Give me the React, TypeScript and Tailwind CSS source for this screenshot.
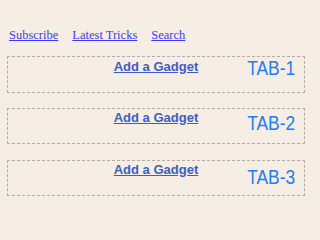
const NAV = ["Subscribe", "Latest Tricks", "Search"];

const TABS = [
  { label: "TAB-1", box: "h-[37px]", gadget: "mt-[2px]", tab: "mt-[1px]" },
  { label: "TAB-2", box: "h-[36px] mt-[15px]", gadget: "mt-[1px]", tab: "mt-[4px]" },
  { label: "TAB-3", box: "h-[36px] mt-[16px]", gadget: "mt-[1px]", tab: "mt-[6px]" },
];

export default function App() {
  return (
    <div className="w-[320px] min-h-screen bg-[#f6ede4] overflow-hidden pb-[11px]">
      <div className="pt-[28px] pl-[9px] flex gap-[14px] text-[12.5px] leading-[14px] font-['Liberation_Serif',serif]">
        {NAV.map(n => (
          <a key={n} href="#" className="text-[#3b3bff] underline">{n}</a>
        ))}
      </div>

      <div className="mt-[14px] ml-[7px] w-[298px]">
        {TABS.map(t => (
          <div key={t.label} className={`${t.box} border border-dashed border-[#b3ada6] grid grid-cols-1`}>
            <a
              href="#"
              className={`${t.gadget} col-start-1 row-start-1 justify-self-center self-start text-[13px] leading-[15px] font-bold text-[#3d5dc8] underline font-['Liberation_Sans',Arial,sans-serif]`}
            >
              Add a Gadget
            </a>
            <span
              className={`${t.tab} col-start-1 row-start-1 justify-self-end self-start mr-[9px] text-[20px] leading-[20px] text-[#1a7ff5] font-['Liberation_Sans',Arial,sans-serif] scale-x-[0.87] origin-right`}
            >
              {t.label}
            </span>
          </div>
        ))}
      </div>
    </div>
  );
}
